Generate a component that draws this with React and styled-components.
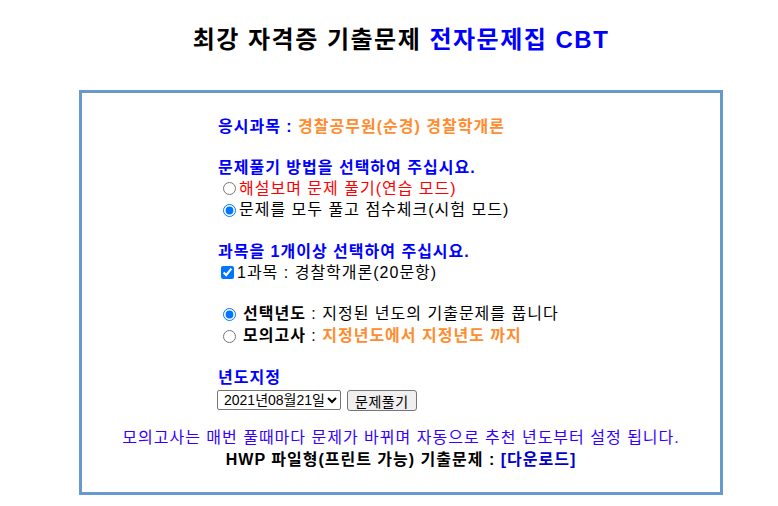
import React, { useState } from 'react';
import styled, { createGlobalStyle } from 'styled-components';

const Global = createGlobalStyle`
	body {
		margin: 0;
		background: #fff;
		font-family: "Liberation Sans", "Noto Sans CJK KR", sans-serif;
		color: #000;
	}
`;

const Page = styled.div`
	width: 644px;
	margin-left: 79px;
`;

const Title = styled.h1`
	margin: 25px 0 0;
	height: 65px;
	line-height: 30px;
	font-size: 24px;
	font-weight: bold;
	text-align: center;
	letter-spacing: 1.5px;
`;

const Blue = styled.span`
	color: ${p => p.$c || '#0000ff'};
`;

const Box = styled.div`
	box-sizing: border-box;
	border: 3px solid #6699cc;
	height: 405px;
	padding: 24px 0 0 136px;
	font-size: 16px;
	letter-spacing: 1px;
`;

const Section = styled.div`
	margin-bottom: ${p => p.$gap ?? 21}px;
`;

const Heading = styled.div`
	height: 20px;
	line-height: 20px;
	font-weight: bold;
	color: #0000ff;
`;

const Orange = styled.span`
	color: #ff8c2e;
`;

const Row = styled.label`
	display: flex;
	align-items: center;
	height: ${p => p.$h || 22}px;
	line-height: 20px;
	color: ${p => p.$color || '#000'};
	white-space: nowrap;
`;

const Radio = styled.input.attrs({ type: 'radio' })`
	width: 13px;
	height: 13px;
	margin: 0 3px 0 5px;
`;

const Check = styled.input.attrs({ type: 'checkbox' })`
	width: 13px;
	height: 13px;
	margin: 0 3px 0 3px;
`;

const Key = styled.b`
	margin-left: 4px;
`;

const Controls = styled.div`
	display: flex;
	align-items: center;
	gap: 6px;
	height: 22px;
	margin-top: 1px;
	margin-left: -1px;
	letter-spacing: 0;
`;

const Select = styled.select`
	width: 124px;
	height: 20px;
	font-family: "Liberation Sans", "Noto Sans CJK KR", sans-serif;
	font-size: 14px;
	border: 1px solid #767676;
	border-radius: 2px;
	padding: 0 0 0 2px;
	background: #fff;
	color: #000;
`;

const Button = styled.button`
	height: 21px;
	padding: 0 7px;
	font-family: "Liberation Sans", "Noto Sans CJK KR", sans-serif;
	font-size: 14px;
	letter-spacing: 0.5px;
	background: #efefef;
	border: 1px solid #767676;
	border-radius: 3px;
	color: #000;
`;

const Footer = styled.div`
	margin-left: -136px;
	text-align: center;
	line-height: 22px;
`;

const Note = styled.div`
	color: #3300ff;
`;

const Hwp = styled.div`
	font-weight: bold;
`;

const App = () => {
	const [mode, setMode] = useState('exam');
	const [kind, setKind] = useState('year');

	return (
		<Page>
			<Global />
			<Title>
				최강 자격증 기출문제 <Blue>전자문제집 CBT</Blue>
			</Title>
			<Box>
				<Section $gap={21}>
					<Heading>응시과목 : <Orange>경찰공무원(순경) 경찰학개론</Orange></Heading>
				</Section>

				<Section $gap={21}>
					<Heading>문제풀기 방법을 선택하여 주십시요.</Heading>
					<Row $h={21} $color="#ff0000">
						<Radio name="mode" checked={mode === 'study'} onChange={() => setMode('study')} />
						해설보며 문제 풀기(연습 모드)
					</Row>
					<Row>
						<Radio name="mode" checked={mode === 'exam'} onChange={() => setMode('exam')} />
						문제를 모두 풀고 점수체크(시험 모드)
					</Row>
				</Section>

				<Section $gap={20}>
					<Heading>과목을 1개이상 선택하여 주십시요.</Heading>
					<Row $h={21}>
						<Check defaultChecked />
						1과목 : 경찰학개론(20문항)
					</Row>
				</Section>

				<Section $gap={21}>
					<Row>
						<Radio name="kind" checked={kind === 'year'} onChange={() => setKind('year')} />
						<Key>선택년도</Key>&nbsp;: 지정된 년도의 기출문제를 풉니다
					</Row>
					<Row>
						<Radio name="kind" checked={kind === 'mock'} onChange={() => setKind('mock')} />
						<Key>모의고사</Key>&nbsp;: <Orange as="b">&nbsp;지정년도에서 지정년도 까지</Orange>
					</Row>
				</Section>

				<Section $gap={16}>
					<Heading>년도지정</Heading>
					<Controls>
						<Select defaultValue="2021-08-21">
							<option value="2021-08-21">2021년08월21일</option>
						</Select>
						<Button>문제풀기</Button>
					</Controls>
				</Section>

				<Footer>
					<Note>모의고사는 매번 풀때마다 문제가 바뀌며 자동으로 추천 년도부터 설정 됩니다.</Note>
					<Hwp>HWP 파일형(프린트 가능) 기출문제 : <Blue $c="#0000cc">[다운로드]</Blue></Hwp>
				</Footer>
			</Box>
		</Page>
	);
};

export default App;
